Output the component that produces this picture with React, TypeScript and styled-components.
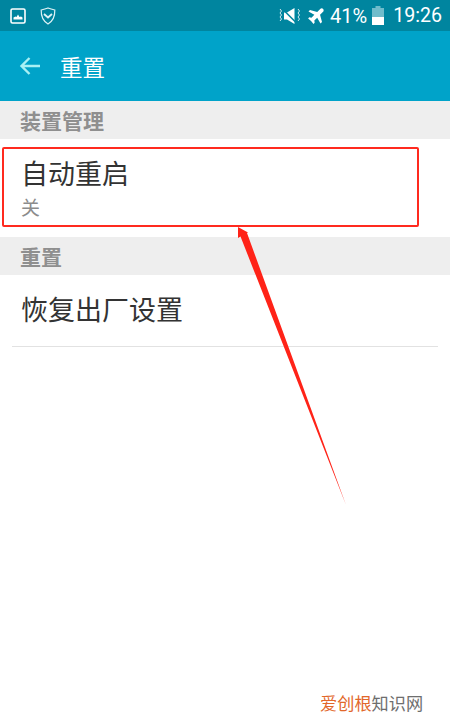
import React from 'react';
import styled, { createGlobalStyle } from 'styled-components';

const GlobalStyle = createGlobalStyle`
  html, body {
    margin: 0;
    padding: 0;
    background: #fff;
  }
  body {
    font-family: "Roboto", "Noto Sans CJK SC", sans-serif;
  }
`;

const Screen = styled.div`
  position: relative;
  width: 450px;
  height: 720px;
  overflow: hidden;
  background: #fff;
`;

const StatusBar = styled.div`
  display: flex;
  justify-content: space-between;
  align-items: center;
  height: 31px;
  padding: 0 8px 0 10px;
  box-sizing: border-box;
  background: #00859f;
  color: #fff;
`;

const StatusGroup = styled.div`
  display: flex;
  align-items: center;
  gap: ${(p: { $gap: number }) => p.$gap}px;
`;

const Percent = styled.span`
  font-size: 20px;
`;

const Clock = styled.span`
  font-size: 19.6px;
  margin-left: 4px;
`;

const AppBar = styled.div`
  display: flex;
  align-items: center;
  height: 70px;
  padding-left: 19px;
  gap: 19px;
  background: #00a3c9;
`;

const AppTitle = styled.span`
  font-size: 22.5px;
  color: #fff;
  font-weight: 400;
`;

const SectionHeader = styled.div`
  display: flex;
  align-items: center;
  height: 38px;
  padding-left: 20px;
  background: #eeeeee;
  font-size: 21px;
  font-weight: 700;
  color: #8f8f8f;
`;

const Row = styled.div`
  display: flex;
  flex-direction: column;
  box-sizing: border-box;
  height: ${(p: { $height: number }) => p.$height}px;
  padding: 18px 0 0 21px;
`;

const RowTitle = styled.div`
  font-size: 27px;
  line-height: 36px;
  color: #333;
`;

const RowValue = styled.div`
  font-size: 19px;
  line-height: 24px;
  margin-top: 4px;
  color: #8c8c8c;
`;

const Divider = styled.div`
  height: 1px;
  margin: 0 12px;
  background: #e2e2e2;
`;

const Highlight = styled.div`
  position: absolute;
  left: 2px;
  top: 147px;
  width: 417px;
  height: 80px;
  box-sizing: border-box;
  border: 2px solid #ff2a1f;
  border-radius: 2px;
`;

const ArrowOverlay = styled.svg`
  position: absolute;
  left: 0;
  top: 0;
  pointer-events: none;
`;

const Watermark = styled.div`
  position: absolute;
  left: 320px;
  top: 692px;
  font-size: 17.2px;
  line-height: 24px;
  white-space: nowrap;
  color: #6e6e6e;
`;

const WatermarkAccent = styled.span`
  color: #e2672b;
`;

const PictureIcon = () => (
  <svg width="16" height="16" viewBox="0 0 16 16">
    <rect x="1" y="1" width="14" height="14" rx="1.5" fill="none" stroke="#fff" strokeWidth="1.6" />
    <path d="M3.5 11.5 V9.5 L5.5 8.5 L6.5 9 L8 6.5 L9.5 9 L11 8.5 L12.5 9.5 V11.5 Z" fill="#fff" />
  </svg>
);

const ShieldIcon = () => (
  <svg width="16" height="18" viewBox="0 0 16 18">
    <path d="M1.2 3 C4 2.4 6 1.8 8 1 C10 1.8 12 2.4 14.8 3 C15 9 13 14 8 17 C3 14 1 9 1.2 3 Z" fill="none" stroke="#dff3f6" strokeWidth="1.2" />
    <path d="M4 7 L8 10.5 L12 7" fill="none" stroke="#dff3f6" strokeWidth="1.8" />
  </svg>
);

const MuteIcon = () => (
  <svg width="24" height="18" viewBox="0 0 24 18">
    <path d="M2 2 l1.5 2 l-1.5 2 l1.5 2 l-1.5 2 l1.5 2 l-1.5 2" fill="none" stroke="#cfe9ee" strokeWidth="1" />
    <path d="M6 5.5 H9 L16.5 1 V17 L9 12.5 H6 Z" fill="#fff" />
    <path d="M4.5 2 L18 15.5" stroke="#00859f" strokeWidth="1.6" />
    <path d="M20 2 l1.5 2 l-1.5 2 l1.5 2 l-1.5 2 l1.5 2 l-1.5 2" fill="none" stroke="#cfe9ee" strokeWidth="1" />
  </svg>
);

const PlaneIcon = () => (
  <svg width="18" height="18" viewBox="0 0 24 24">
    <path
      d="M21.5 2.5 c-1.2 -1.2 -3 -.8 -4.2 .4 L13.6 6.6 L4 4 L2 6 L9.8 10.4 L6 14.2 L3 13.8 L1.5 15.3 L5.4 18.6 L8.7 22.5 L10.2 21 L9.8 18 L13.6 14.2 L18 22 L20 20 L17.4 10.4 L21.1 6.7 c1.2 -1.2 1.6 -3 .4 -4.2 Z"
      fill="#fff"
    />
  </svg>
);

const BatteryIcon = () => (
  <svg width="12" height="20" viewBox="0 0 12 20">
    <rect x="3.5" y="0" width="5" height="2" fill="#6fbccb" />
    <rect x="0" y="2" width="12" height="9" fill="#6fbccb" />
    <rect x="0" y="11" width="12" height="8" fill="#fff" />
  </svg>
);

const BackIcon = () => (
  <svg width="22" height="20" viewBox="0 0 22 20">
    <path d="M21 10 H2.5 M10.5 2 L2.5 10 L10.5 18" fill="none" stroke="#a8f0f4" strokeWidth="2.4" />
  </svg>
);

const App = () => {
  return (
    <Screen>
      <GlobalStyle />
      <StatusBar>
        <StatusGroup $gap={14}>
          <PictureIcon />
          <ShieldIcon />
        </StatusGroup>
        <StatusGroup $gap={5}>
          <MuteIcon />
          <PlaneIcon />
          <Percent>41%</Percent>
          <BatteryIcon />
          <Clock>19:26</Clock>
        </StatusGroup>
      </StatusBar>
      <AppBar>
        <BackIcon />
        <AppTitle>重置</AppTitle>
      </AppBar>
      <SectionHeader>装置管理</SectionHeader>
      <Row $height={98}>
        <RowTitle>自动重启</RowTitle>
        <RowValue>关</RowValue>
      </Row>
      <SectionHeader>重置</SectionHeader>
      <Row $height={71}>
        <RowTitle>恢复出厂设置</RowTitle>
      </Row>
      <Divider />
      <Highlight />
      <ArrowOverlay width="450" height="720" viewBox="0 0 450 720">
        <path d="M238 227 L248 232.5 L247 233 L346 505 L240.5 236.5 L238 238 Z" fill="#ff2318" />
      </ArrowOverlay>
      <Watermark>
        <WatermarkAccent>爱创根</WatermarkAccent>知识网
      </Watermark>
    </Screen>
  );
};

export default App;
